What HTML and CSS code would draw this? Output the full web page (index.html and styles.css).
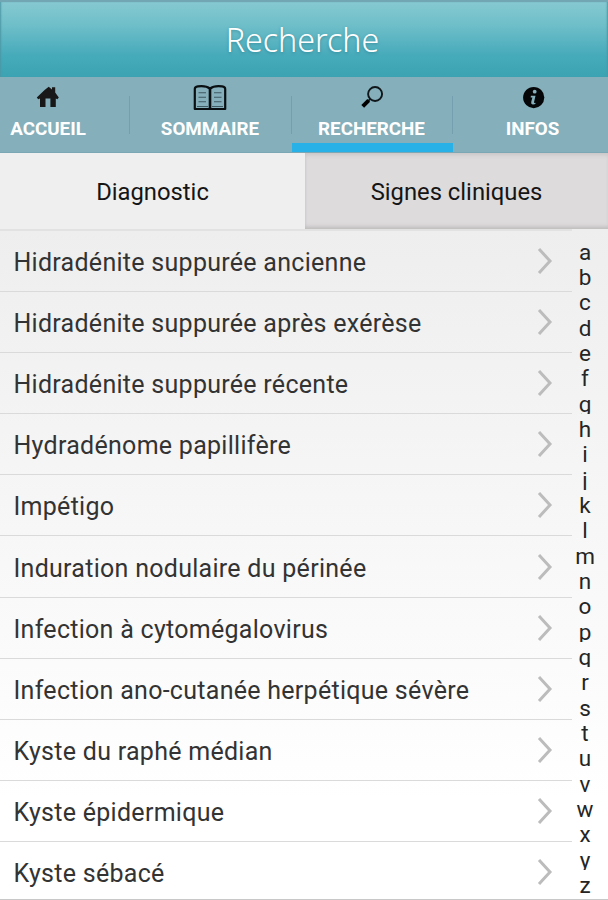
FILE: index.html
```
<!DOCTYPE html>
<html lang="fr">
<head>
<meta charset="utf-8">
<title>Recherche</title>
<link rel="stylesheet" href="styles.css">
</head>
<body>
<header class="header"><h1>Recherche</h1></header>
<nav class="nav">
  <a class="nav-item"><svg width="24" height="24" viewBox="0 0 24 24"><path d="M.8 12.6 8.6 5 12.7 1.8 16 4.6V2.2h3.2v5.3l3.6 4.9-1.4 1.8-1.6-.8v8.5h-5.4v-8.3H9.5v8.3H4v-8.5l-1.8.9z" fill="#181818"/></svg><span class="label">ACCUEIL</span></a>
  <a class="nav-item book"><svg width="34" height="28" viewBox="0 0 34 28"><path d="M1.8 25V5q0-2.3 3-2.7Q13 1.2 17 4.6q4-3.4 12.2-2.3 3 .4 3 2.7v20H1.8z" fill="none" stroke="#0a1012" stroke-width="2.2" stroke-linejoin="round"/><path d="M17 4.5V25" stroke="#0a1012" stroke-width="2.6"/><path d="M5.5 8.7H13M5.5 13.2H13M5.5 17.7H13M21 8.7h7.5M21 13.2h7.5M21 17.7h7.5M4 22.5h11M19 22.5h11" stroke="#3e5a63" stroke-width="1.1"/></svg><span class="label">SOMMAIRE</span></a>
  <a class="nav-item active"><svg width="24" height="24" viewBox="0 0 24 24"><circle cx="15.1" cy="9" r="7" fill="none" stroke="#10171a" stroke-width="1.9"/><path d="m10.3 13.8-2 2" stroke="#10171a" stroke-width="1.8"/><path d="m8.7 15.4-6 6" stroke="#000" stroke-width="4"/></svg><span class="label">RECHERCHE</span></a>
  <a class="nav-item"><svg width="24" height="24" viewBox="0 0 24 24"><circle cx="12.7" cy="12.6" r="10.6" fill="#050607"/><circle cx="13.7" cy="6.7" r="1.9" fill="#84afbb"/><path d="M9.9 10.8h4.6l-1.5 6.4q-.2 1.3 2.2.5-1.4 2-3.5 1.9-2-.2-1.5-2.5l1.2-4.7H9.7z" fill="#84afbb"/></svg><span class="label">INFOS</span></a>
</nav>
<div class="tabs"><div class="tab selected">Diagnostic</div><div class="tab">Signes cliniques</div></div>
<main class="content">
  <ul class="list">
    <li><span>Hidradénite suppurée ancienne</span><svg class="chev" viewBox="0 0 16 28"><path d="m2 2 11 12L2 26"/></svg></li>
    <li><span>Hidradénite suppurée après exérèse</span><svg class="chev" viewBox="0 0 16 28"><path d="m2 2 11 12L2 26"/></svg></li>
    <li><span>Hidradénite suppurée récente</span><svg class="chev" viewBox="0 0 16 28"><path d="m2 2 11 12L2 26"/></svg></li>
    <li><span>Hydradénome papillifère</span><svg class="chev" viewBox="0 0 16 28"><path d="m2 2 11 12L2 26"/></svg></li>
    <li><span>Impétigo</span><svg class="chev" viewBox="0 0 16 28"><path d="m2 2 11 12L2 26"/></svg></li>
    <li><span>Induration nodulaire du périnée</span><svg class="chev" viewBox="0 0 16 28"><path d="m2 2 11 12L2 26"/></svg></li>
    <li><span>Infection à cytomégalovirus</span><svg class="chev" viewBox="0 0 16 28"><path d="m2 2 11 12L2 26"/></svg></li>
    <li><span>Infection ano-cutanée herpétique sévère</span><svg class="chev" viewBox="0 0 16 28"><path d="m2 2 11 12L2 26"/></svg></li>
    <li><span>Kyste du raphé médian</span><svg class="chev" viewBox="0 0 16 28"><path d="m2 2 11 12L2 26"/></svg></li>
    <li><span>Kyste épidermique</span><svg class="chev" viewBox="0 0 16 28"><path d="m2 2 11 12L2 26"/></svg></li>
    <li><span>Kyste sébacé</span><svg class="chev" viewBox="0 0 16 28"><path d="m2 2 11 12L2 26"/></svg></li>
  </ul>
  <div class="index"><b>a</b><b>b</b><b>c</b><b>d</b><b>e</b><b>f</b><b>g</b><b>h</b><b>i</b><b>j</b><b>k</b><b>l</b><b>m</b><b>n</b><b>o</b><b>p</b><b>q</b><b>r</b><b>s</b><b>t</b><b>u</b><b>v</b><b>w</b><b>x</b><b>y</b><b>z</b></div>
</main>
</body>
</html>
```
FILE: styles.css
```
* { box-sizing: border-box; }
body {
  margin: 0;
  width: 608px;
  height: 900px;
  overflow: hidden;
  display: flex;
  flex-direction: column;
  font-family: Roboto, "Liberation Sans", sans-serif;
  background: #fff;
}
.header {
  flex: 0 0 77px;
  display: flex;
  justify-content: center;
  padding-top: 3px;
  border-top: 2px solid #73a6b3;
  background: linear-gradient(#86c9d1, #6fbfc9 30%, #46aaba 72%, #3ba3b3);
  box-shadow: inset 2px 0 2px -1px #4c97a5, inset -2px 0 2px -1px #4c97a5;
}
h1 {
  margin: 0;
  padding-right: 3px;
  font: 300 32.2px/70px "Noto Sans", "Open Sans", sans-serif;
  color: #fff;
  text-shadow: 0 1px 3px rgba(20, 90, 105, .4);
}
.nav {
  flex: 0 0 76px;
  display: grid;
  grid-template-columns: 162px 162px 161px 161px;
  margin-left: -32px;
  background: #84afbb;
  border-bottom: 1px solid #7ba7b4;
}
.nav-item {
  display: grid;
  grid-template-rows: 40px 24px;
  place-items: center;
  align-content: start;
  padding-right: 2px;
  color: #fff;
  border-bottom: 9px solid transparent;
  background: linear-gradient(#759fad, #759fad) right 19px / 1px 38px no-repeat;
}
.nav-item:last-child { background: none; }
.nav-item.active { border-bottom-color: #27b1e7; }
.book svg { margin-top: 2px; }
.label { font-size: 18.8px; font-weight: 700; line-height: 24px; }
.tabs { flex: 0 0 76px; display: grid; grid-template: 76px / 305px 303px; }
.tab {
  padding-top: 2px;
  font-size: 23.8px;
  line-height: 74px;
  text-align: center;
  color: #151515;
  background: #dedbdc;
  box-shadow: inset 0 4px 4px -2px #c8c5c6, inset 0 -5px 4px -3px #bbb8b9, inset 2px 0 2px -1px #d2cfd0;
}
.tab.selected { background: #efefef; box-shadow: none; }
.content {
  flex: 1;
  min-height: 0;
  display: grid;
  grid-template-columns: 572px 36px;
  grid-template-rows: 100%;
  background: linear-gradient(#eee, #fff 85%);
  border-bottom: 1px solid #c8c8c8;
}
.list { list-style: none; margin: 0; padding: 0; border-top: 2px solid #e2e2e2; }
.list li {
  height: 61.1px;
  display: flex;
  align-items: center;
  justify-content: space-between;
  padding: 3px 19px 0 13.5px;
  border-bottom: 1px solid #dadada;
  font-size: 25px;
  letter-spacing: .28px;
  color: #333;
  white-space: nowrap;
}
.list li:last-child { height: 57px; padding-top: 6px; border-bottom: 0; }
.chev { width: 16px; height: 28px; margin-top: -3px; fill: none; stroke: #bcbcbc; stroke-width: 3; }
.index { padding: 7.5px 10px 0 0; text-align: center; }
.index b {
  display: block;
  height: 25.35px;
  line-height: 31.5px;
  overflow: hidden;
  font-size: 22.5px;
  font-weight: 400;
  color: #252525;
}
```
